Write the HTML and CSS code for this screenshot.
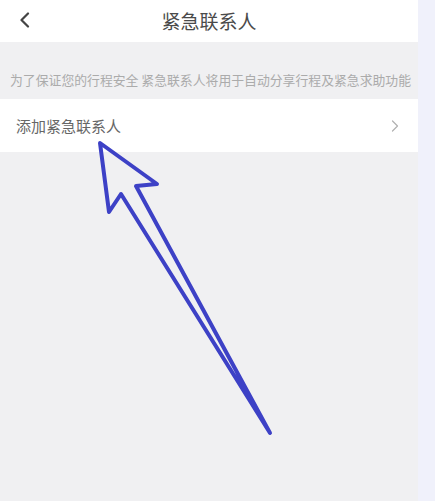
FILE: index.html
```html
<!DOCTYPE html>
<html lang="zh-CN">
<head>
    <meta charset="UTF-8">
    <meta name="viewport" content="width=device-width, initial-scale=1.0">
    <title>紧急联系人</title>
    <link rel="stylesheet" href="styles.css">
</head>
<body>
    <div class="screen">
        <div class="header">
            <svg class="back" width="12" height="16" viewBox="0 0 12 16">
                <path d="M9 1.5 L2.5 8 L9 14.5" fill="none" stroke="#444" stroke-width="2.2" stroke-linecap="round" stroke-linejoin="round"/>
            </svg>
            <h2 class="title">紧急联系人</h2>
        </div>
        <p class="notice">为了保证您的行程安全 紧急联系人将用于自动分享行程及紧急求助功能</p>
        <div class="row">
            <span class="row-label">添加紧急联系人</span>
            <svg class="chevron" width="8" height="12" viewBox="0 0 8 12">
                <path d="M1.5 1 L6.5 6 L1.5 11" fill="none" stroke="#b0b0b0" stroke-width="1.2" stroke-linecap="round" stroke-linejoin="round"/>
            </svg>
        </div>

        <!-- hand-drawn pointer over the add row -->
        <svg class="pointer" width="418" height="501" viewBox="0 0 418 501">
            <path d="M100 143 L157 184 L136 186 L270 433 L121 194 L109 212 Z" fill="none" stroke="#3d41c6" stroke-width="4" stroke-linecap="round" stroke-linejoin="round"/>
        </svg>
    </div>
    <div class="edge"></div>
</body>
</html>
```

FILE: styles.css
```css
body {
    margin: 0;
    padding: 0;
    display: flex;
    height: 501px;
    overflow: hidden;
    font-family: "Noto Sans CJK SC", "Noto Sans", sans-serif;
}
.screen {
    position: relative;
    width: 418px;
    height: 100%;
    background: #f0f0f2;
}
.edge {
    flex: 1;
    background: #f0f1fb;
}
.header {
    position: relative;
    height: 42px;
    background: #fff;
    display: flex;
    align-items: center;
    justify-content: center;
}
.back {
    position: absolute;
    left: 19px;
    top: 12px;
}
.title {
    margin: 0;
    font-size: 19px;
    font-weight: normal;
    color: #4a4a4a;
    line-height: 42px;
}
.notice {
    margin: 0;
    padding: 30px 0 11px 10px;
    font-size: 12.85px;
    line-height: 16px;
    color: #ababab;
    white-space: nowrap;
}
.row {
    height: 53px;
    background: #fff;
    display: flex;
    align-items: center;
    justify-content: space-between;
    padding: 0 19px 0 16px;
}
.row-label {
    font-size: 15px;
    color: #666;
}
.pointer {
    position: absolute;
    left: 0;
    top: 0;
}
```
